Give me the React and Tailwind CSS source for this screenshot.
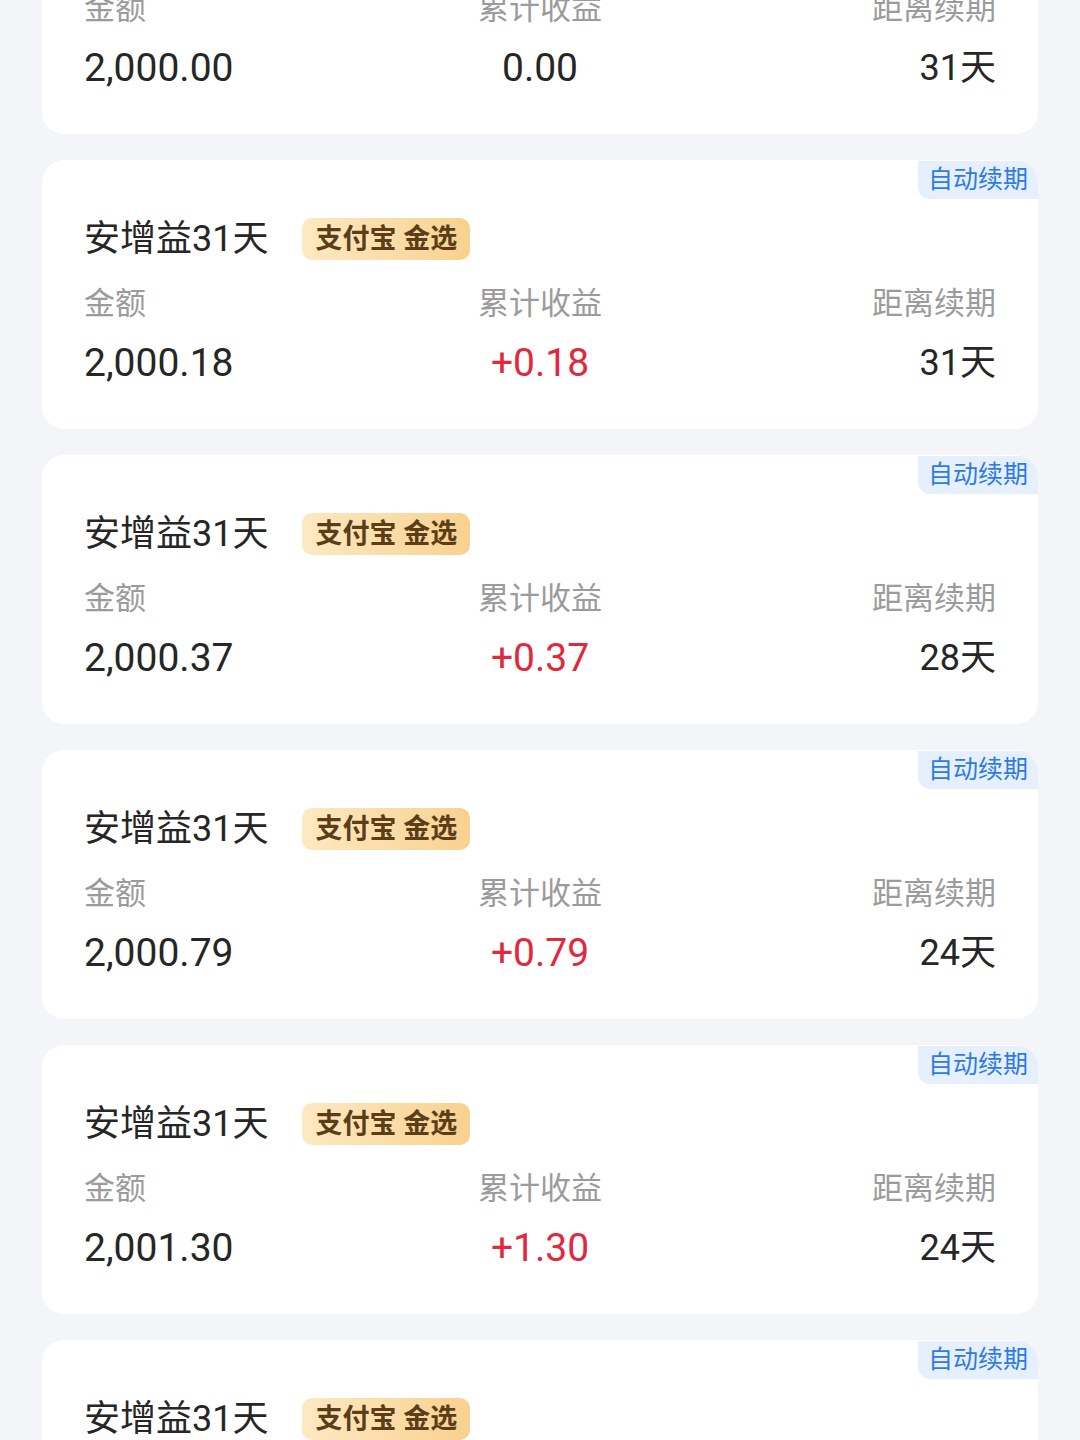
import React from 'react';

const items = [
  { amount: '2,000.00', income: '0.00', days: '31天' },
  { amount: '2,000.18', income: '+0.18', days: '31天' },
  { amount: '2,000.37', income: '+0.37', days: '28天' },
  { amount: '2,000.79', income: '+0.79', days: '24天' },
  { amount: '2,001.30', income: '+1.30', days: '24天' },
  { amount: '2,001.30', income: '+1.30', days: '24天' },
];

const HoldingCard = ({ item, first }) => {
  const up = item.income.startsWith('+');
  return (
    <div className={`relative overflow-hidden rounded-[22px] bg-white px-[42px] pt-[58px] pb-[46px] ${first ? 'mt-[-135px]' : ''}`}>
      {/* Auto renew tag */}
      <div className="absolute right-0 top-[1px] rounded-bl-[12px] bg-[#e6f0fd] px-[10px] py-[2px] text-[25px] leading-[34px] text-[#2f7ae5]">
        自动续期
      </div>

      <div className="flex items-center">
        <span className="text-[36px] leading-[42px] text-[#262626]">安增益31天</span>
        <span className="ml-[34px] rounded-[10px] bg-gradient-to-r from-[#fde9c2] to-[#f8d18e] px-[13px] py-[3px] text-[27px] font-bold leading-[36px] text-[#5b3d18]">
          支付宝 金选
        </span>
      </div>

      <div className="mt-[26px] grid grid-cols-3 text-[31px] leading-[36px] text-[#9b9b9b]">
        <span>金额</span>
        <span className="text-center">累计收益</span>
        <span className="text-right">距离续期</span>
      </div>

      <div className="mt-[21px] grid grid-cols-3 items-center text-[39px] leading-[40px]">
        <span className="text-[#262626]">{item.amount}</span>
        <span className={`text-center ${up ? 'text-[#e2283c]' : 'text-[#262626]'}`}>{item.income}</span>
        <span className="text-right text-[36px] text-[#262626]">{item.days}</span>
      </div>
    </div>
  );
};

export default function App() {
  return (
    <div
      className="h-[1440px] overflow-hidden bg-[#f4f5f9] px-[42px]"
      style={{ fontFamily: "Roboto, 'Noto Sans CJK SC', sans-serif" }}
    >
      <div className="flex flex-col gap-[26px]">
        {items.map((item, i) => (
          <HoldingCard key={i} item={item} first={i === 0} />
        ))}
      </div>
    </div>
  );
}
